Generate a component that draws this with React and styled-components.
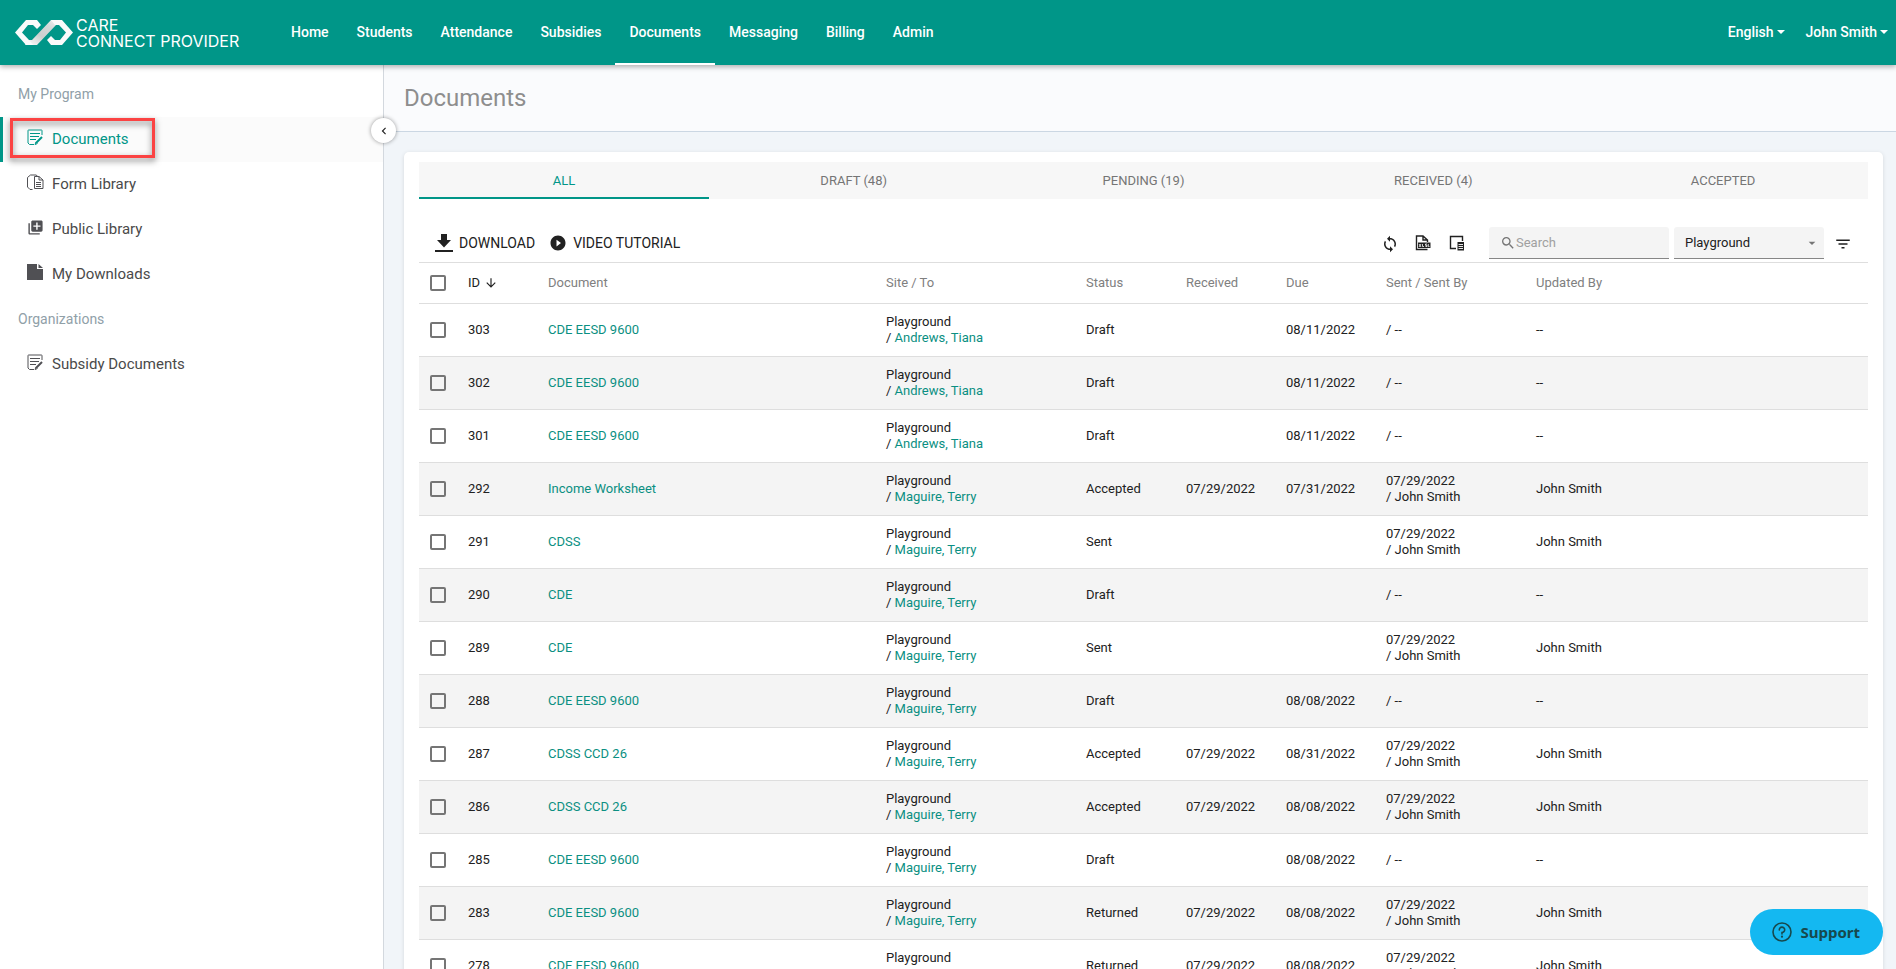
import React from "react";
import styled, { createGlobalStyle, css } from "styled-components";
import {
  MdArrowDownward,
  MdArrowDropDown,
  MdChevronLeft,
  MdFilterList,
  MdLibraryAdd,
  MdPlayCircleFilled,
  MdSearch,
  MdSync,
} from "react-icons/md";

const teal = "#009688";

const GlobalStyle = createGlobalStyle`
  *, *::before, *::after { box-sizing: border-box; }
  body {
    margin: 0;
    font-family: Roboto, "Liberation Sans", sans-serif;
    font-size: 13px;
    line-height: 16px;
    color: #212121;
  }
  a { color: inherit; text-decoration: none; }
  button, input, select { font: inherit; color: inherit; }
  button { border: 0; padding: 0; background: none; cursor: pointer; }
`;

const Page = styled.div`
  display: flex;
  flex-direction: column;
  height: 100vh;
  overflow: hidden;
`;

/* Header */

const Header = styled.header`
  display: flex;
  align-items: stretch;
  flex: none;
  height: 65px;
  padding: 0 8px 0 15px;
  background: ${teal};
  color: #fff;
  position: relative;
  z-index: 2;
  box-shadow: 0 2px 5px rgba(0, 0, 0, 0.3);
`;

const Brand = styled.a`
  display: flex;
  align-items: center;
  gap: 3px;
  width: 262px;
`;

const BrandName = styled.span`
  font-family: Inter, sans-serif;
  font-size: 16px;
  line-height: 16px;
  white-space: nowrap;
`;

const BrandLine = styled.span`
  display: block;
`;

const Nav = styled.nav`
  display: flex;
  flex: 1;
`;

const NavLink = styled.a`
  display: flex;
  align-items: center;
  padding: 1px 14px 0;
  border-bottom: 2px solid ${(p) => (p.$active ? "#fff" : "transparent")};
  font-size: 14px;
  font-weight: 500;
`;

const HeaderActions = styled.div`
  display: flex;
  gap: 21px;
`;

const HeaderMenu = styled.button`
  display: flex;
  align-items: center;
  gap: 3px;
  padding-bottom: 1px;
  font-size: 14px;
  font-weight: 500;
`;

const Caret = styled.span`
  border: 4px solid transparent;
  border-top-color: currentColor;
  border-bottom: 0;
`;

/* Sidebar */

const Body = styled.div`
  display: flex;
  flex: 1;
  min-height: 0;
`;

const Sidebar = styled.aside`
  position: relative;
  flex: none;
  width: 384px;
  padding-top: 7px;
  border-right: 1px solid #d3d8de;
  background: #fff;
`;

const SectionLabel = styled.h2`
  display: flex;
  align-items: center;
  height: 45px;
  margin: 0;
  padding: 0 0 1px 18px;
  font-size: 14px;
  font-weight: 400;
  color: #90a0a8;
`;

const SideLink = styled.a`
  position: relative;
  display: flex;
  align-items: center;
  gap: 8px;
  height: 45px;
  padding: 0 0 2px 23px;
  border-left: 3px solid ${(p) => (p.$active ? teal : "transparent")};
  background: ${(p) => (p.$active ? "#fbfbfb" : "none")};
  color: ${(p) => (p.$active ? teal : "#4a4a4a")};
  font-size: 15px;
`;

const SideIcon = styled.span`
  display: grid;
  place-items: center;
  flex: none;
  width: 18px;
  height: 18px;
  margin-bottom: 3px;
  color: ${(p) => (p.$active ? teal : "#505054")};
`;

const Highlight = styled.span`
  position: absolute;
  left: 7px;
  top: 1px;
  width: 145px;
  height: 40px;
  border: 3px solid #fb4343;
  filter: drop-shadow(0 3px 3px rgba(0, 0, 0, 0.5));
`;

const Collapse = styled.button`
  position: absolute;
  top: 53px;
  right: -13px;
  z-index: 1;
  display: grid;
  place-items: center;
  width: 25px;
  height: 25px;
  border-radius: 50%;
  background: #fff;
  box-shadow: 0 0 4px rgba(0, 0, 0, 0.4);
`;

/* Main area */

const Main = styled.main`
  display: flex;
  flex-direction: column;
  flex: 1;
  min-width: 0;
  background: #f1f5f9;
`;

const TitleBar = styled.div`
  flex: none;
  height: 67px;
  padding: 18px 20px 0;
  border-bottom: 1px solid #cbd7e3;
  background: #fafbfd;
`;

const Title = styled.h1`
  margin: 0;
  font-size: 24px;
  line-height: 30px;
  font-weight: 400;
  color: #8e8e8e;
`;

const Card = styled.section`
  margin: 20px 13px 0 20px;
  padding: 10px 15px;
  border-radius: 5px;
  background: #fff;
  box-shadow: 0 1px 4px rgba(0, 0, 0, 0.12);
`;

const Tabs = styled.div`
  display: flex;
  height: 37px;
  background: #f7f7f7;
`;

const Tab = styled.button`
  flex: 1;
  padding-top: 2px;
  border-bottom: 2px solid ${(p) => (p.$active ? teal : "transparent")};
  color: ${(p) => (p.$active ? teal : "#757575")};
`;

const Toolbar = styled.div`
  display: flex;
  align-items: center;
  height: 64px;
  padding: 25px 18px 0 16px;
  border-bottom: 1px solid #dedede;
`;

const TextButton = styled.button`
  display: flex;
  align-items: center;
  gap: 6px;
  margin-right: 14px;
  font-size: 14px;
`;

const IconGroup = styled.div`
  display: flex;
  gap: 18px;
  margin: 0 24px 0 auto;
`;

const IconButton = styled.button`
  display: grid;
  place-items: center;
  width: 16px;
  height: 16px;
`;

const fieldBox = css`
  height: 32px;
  border: 0;
  border-bottom: 1px solid #868686;
  border-radius: 3px 3px 0 0;
  background: #f4f4f4;
`;

const SearchBox = styled.label`
  ${fieldBox}
  display: flex;
  align-items: center;
  width: 180px;
  padding: 1px 10px 0 11px;
  margin-right: 5px;
  color: #757575;
`;

const SearchInput = styled.input`
  flex: 1;
  min-width: 0;
  padding: 0;
  border: 0;
  outline: 0;
  background: none;

  &::placeholder { color: #a0a0a0; }
`;

const SelectBox = styled.div`
  position: relative;
  width: 150px;
  margin-right: 10px;

  svg {
    position: absolute;
    right: 4px;
    top: 8px;
    color: #757575;
    pointer-events: none;
  }
`;

const Select = styled.select`
  ${fieldBox}
  width: 100%;
  padding: 1px 11px 0;
  appearance: none;
  outline: 0;
`;

/* Table */

const Table = styled.table`
  width: 100%;
  table-layout: fixed;
  border-collapse: separate;
  border-spacing: 0;
`;

const HeadCell = styled.th`
  height: 41px;
  padding: 0 0 0 10px;
  border-bottom: 1px solid #dedede;
  text-align: left;
  font-weight: 400;
  color: ${(p) => (p.$sorted ? "#212121" : "#808080")};
`;

const SortButton = styled.button`
  display: flex;
  align-items: center;
  gap: 4px;
`;

const Row = styled.tr`
  background: ${(p) => (p.$shaded ? "#f4f4f4" : "#fff")};
`;

const Cell = styled.td`
  height: 53px;
  padding: 0 0 0 10px;
  border-bottom: 1px solid #dedede;
`;

const Link = styled.a`
  color: #0b8f82;
`;

const Checkbox = styled.input`
  display: block;
  appearance: none;
  width: 16px;
  height: 16px;
  margin: 0 0 0 1px;
  border: 2px solid #757575;
  border-radius: 2px;

  &:checked { background: ${teal}; border-color: ${teal}; }
`;

const Support = styled.button`
  position: fixed;
  right: 13px;
  bottom: 14px;
  z-index: 3;
  display: flex;
  align-items: center;
  gap: 8px;
  height: 46px;
  padding: 0 23px 0 22px;
  border-radius: 23px;
  background: #14b8f1;
  color: #17494d;
  font-family: "Noto Sans", sans-serif;
  font-size: 15px;
  font-weight: 700;
`;

/* Drawings */

const LogoMark = () => (
  <svg width="58" height="25" viewBox="0 0 58 25" aria-hidden="true">
    <defs>
      <linearGradient id="band" x1="0" y1="1" x2="1" y2="0">
        <stop offset="0.1" stopColor="#f4f4f4" />
        <stop offset="0.4" stopColor="#cccfcf" />
        <stop offset="0.7" stopColor="#d4d8d8" />
        <stop offset="1" stopColor="#f8f8f8" />
      </linearGradient>
    </defs>
    <path d="M36 0H46L41 5L22 25H10L14 20H17Z" fill="url(#band)" />
    <path d="M11 0H22L26 5L22 9L18 5H13L7 12.500L14 20L18 25H11L0 12.500Z" fill="#fafafa" />
    <path d="M36 0H47L58 12.500L47 25H36L32 20L36 16L40 20H45L51 12.500L44 5H40Z" fill="#fafafa" />
  </svg>
);

const NoteIcon = () => (
  <svg width="16" height="17" viewBox="0 0 16 17" fill="none" stroke="currentColor" aria-hidden="true">
    <path d="M15 6V1.500Q15 1 14.500 1H1.500Q1 1 1 1.500V14L2.500 15.500H7" />
    <path d="M3 4.500H13M3 7.500H12M3 10.500H9" />
    <path d="M15 8L9 14" strokeWidth="2" />
    <path d="M9 13L8 15.500L10.500 14.500" />
  </svg>
);

const FormsIcon = () => (
  <svg width="17" height="17" viewBox="0 0 17 17" fill="none" stroke="currentColor" aria-hidden="true">
    <path d="M5.500 15.500H3L.5 13V3.500L3.500 1H9L10.500 2" />
    <path d="M7.500 14.500V2.500H12L16 6V14.500Z" />
    <path d="M12 2.500V6H16M9 8.500H14M9 10.500H14M9 12.500H14" />
  </svg>
);

const FileIcon = () => (
  <svg width="16" height="16" viewBox="0 0 16 16" fill="currentColor" aria-hidden="true">
    <path d="M0 0H10V5H16V16H0ZM11.500 0L16 4H11.500Z" />
  </svg>
);

const DownloadIcon = () => (
  <svg width="18" height="18" viewBox="0 0 18 18" fill="currentColor" aria-hidden="true">
    <path d="M6 0H12V6H16L9 13.500L2 6H6ZM0 16H18V18H0Z" />
  </svg>
);

const SheetIcon = () => (
  <svg width="16" height="16" viewBox="0 0 16 16" fill="none" stroke="currentColor" aria-hidden="true">
    <path d="M12.500 14.500H1.500V1H8L12.500 5V7M8 1V5H12.500" strokeWidth="1.400" />
    <path d="M3 7.500H15.500V13H3Z" fill="currentColor" stroke="none" />
    <path d="M4 9L6 12M6 9L4 12M7.500 9V11.500H9M12 9H10.500V10.300H12V11.500H10.500M13.300 9V11.500H14.500" stroke="#fff" strokeWidth=".8" />
  </svg>
);

const ColumnsIcon = () => (
  <svg width="16" height="16" viewBox="0 0 16 16" fill="none" stroke="currentColor" aria-hidden="true">
    <path d="M7 13.500H1.500V1.500H13.500V6" strokeWidth="1.400" />
    <path d="M8.500 7H15V15.500H8.500Z" fill="currentColor" stroke="none" />
    <path d="M9.500 9.500H14M9.500 11.500H14M9.500 13.500H14" stroke="#fff" strokeWidth=".9" />
  </svg>
);

const HelpIcon = () => (
  <svg width="20" height="20" viewBox="0 0 20 20" fill="none" stroke="currentColor" strokeWidth="1.600" aria-hidden="true">
    <circle cx="10" cy="10" r="9" />
    <path d="M7.300 8A2.700 2.700 0 1 1 10 10.500V12" strokeLinecap="round" />
    <circle cx="10" cy="14.700" r="1.100" fill="currentColor" stroke="none" />
  </svg>
);

/* Data */

const navItems = ["Home", "Students", "Attendance", "Subsidies", "Documents", "Messaging", "Billing", "Admin"];
const tabs = ["ALL", "DRAFT (48)", "PENDING (19)", "RECEIVED (4)", "ACCEPTED"];
const columns = ["Document", "Site / To", "Status", "Received", "Due", "Sent / Sent By", "Updated By"];

const andrews = "Andrews, Tiana";
const maguire = "Maguire, Terry";
const john = "John Smith";
const jul29 = "07/29/2022";

const documents = [
  { id: 303, name: "CDE EESD 9600", to: andrews, status: "Draft", due: "08/11/2022" },
  { id: 302, name: "CDE EESD 9600", to: andrews, status: "Draft", due: "08/11/2022" },
  { id: 301, name: "CDE EESD 9600", to: andrews, status: "Draft", due: "08/11/2022" },
  { id: 292, name: "Income Worksheet", to: maguire, status: "Accepted", received: jul29, due: "07/31/2022", sent: jul29, by: john },
  { id: 291, name: "CDSS", to: maguire, status: "Sent", sent: jul29, by: john },
  { id: 290, name: "CDE", to: maguire, status: "Draft" },
  { id: 289, name: "CDE", to: maguire, status: "Sent", sent: jul29, by: john },
  { id: 288, name: "CDE EESD 9600", to: maguire, status: "Draft", due: "08/08/2022" },
  { id: 287, name: "CDSS CCD 26", to: maguire, status: "Accepted", received: jul29, due: "08/31/2022", sent: jul29, by: john },
  { id: 286, name: "CDSS CCD 26", to: maguire, status: "Accepted", received: jul29, due: "08/08/2022", sent: jul29, by: john },
  { id: 285, name: "CDE EESD 9600", to: maguire, status: "Draft", due: "08/08/2022" },
  { id: 283, name: "CDE EESD 9600", to: maguire, status: "Returned", received: jul29, due: "08/08/2022", sent: jul29, by: john },
  { id: 278, name: "CDE EESD 9600", to: maguire, status: "Returned", received: jul29, due: "08/08/2022", sent: jul29, by: john },
];

const DocumentRow = ({ doc, shaded }) => (
  <Row $shaded={shaded}>
    <Cell><Checkbox type="checkbox" aria-label={`Select document ${doc.id}`} /></Cell>
    <Cell>{doc.id}</Cell>
    <Cell><Link href="#">{doc.name}</Link></Cell>
    <Cell>Playground<br />/ <Link href="#">{doc.to}</Link></Cell>
    <Cell>{doc.status}</Cell>
    <Cell>{doc.received}</Cell>
    <Cell>{doc.due}</Cell>
    <Cell>{doc.sent && <>{doc.sent}<br /></>}/ {doc.by || "--"}</Cell>
    <Cell>{doc.by || "--"}</Cell>
    <Cell />
  </Row>
);

const SideItem = ({ icon, label, active, children }) => (
  <SideLink href="#" $active={active}>
    <SideIcon $active={active}>{icon}</SideIcon>
    {label}
    {children}
  </SideLink>
);

export default function App() {
  return (
    <Page>
      <GlobalStyle />
      <Header>
        <Brand href="#">
          <LogoMark />
          <BrandName>
            <BrandLine>CARE</BrandLine>
            <BrandLine>CONNECT PROVIDER</BrandLine>
          </BrandName>
        </Brand>
        <Nav>
          {navItems.map((item) => (
            <NavLink key={item} href="#" $active={item === "Documents"}>{item}</NavLink>
          ))}
        </Nav>
        <HeaderActions>
          <HeaderMenu>English<Caret /></HeaderMenu>
          <HeaderMenu>John Smith<Caret /></HeaderMenu>
        </HeaderActions>
      </Header>
      <Body>
        <Sidebar>
          <SectionLabel>My Program</SectionLabel>
          <SideItem icon={<NoteIcon />} label="Documents" active><Highlight /></SideItem>
          <SideItem icon={<FormsIcon />} label="Form Library" />
          <SideItem icon={<MdLibraryAdd size={17} />} label="Public Library" />
          <SideItem icon={<FileIcon />} label="My Downloads" />
          <SectionLabel>Organizations</SectionLabel>
          <SideItem icon={<NoteIcon />} label="Subsidy Documents" />
          <Collapse aria-label="Collapse sidebar"><MdChevronLeft size={14} /></Collapse>
        </Sidebar>
        <Main>
          <TitleBar><Title>Documents</Title></TitleBar>
          <Card>
            <Tabs role="tablist">
              {tabs.map((tab, i) => (
                <Tab key={tab} role="tab" aria-selected={i === 0} $active={i === 0}>{tab}</Tab>
              ))}
            </Tabs>
            <Toolbar>
              <TextButton><DownloadIcon />DOWNLOAD</TextButton>
              <TextButton><MdPlayCircleFilled size={18} />VIDEO TUTORIAL</TextButton>
              <IconGroup>
                <IconButton aria-label="Refresh"><MdSync size={18} /></IconButton>
                <IconButton aria-label="Export to spreadsheet"><SheetIcon /></IconButton>
                <IconButton aria-label="Choose columns"><ColumnsIcon /></IconButton>
              </IconGroup>
              <SearchBox>
                <MdSearch size={16} />
                <SearchInput type="text" placeholder="Search" aria-label="Search" />
              </SearchBox>
              <SelectBox>
                <Select aria-label="Site"><option>Playground</option></Select>
                <MdArrowDropDown size={16} />
              </SelectBox>
              <IconButton aria-label="Filter"><MdFilterList size={18} /></IconButton>
            </Toolbar>
            <Table>
              <colgroup>
                <col width="39" />
                <col width="80" />
                <col />
                <col width="200" />
                <col width="100" />
                <col width="100" />
                <col width="100" />
                <col width="150" />
                <col width="150" />
                <col width="192" />
              </colgroup>
              <thead>
                <tr>
                  <HeadCell><Checkbox type="checkbox" aria-label="Select all documents" /></HeadCell>
                  <HeadCell $sorted><SortButton>ID<MdArrowDownward size={14} /></SortButton></HeadCell>
                  {columns.map((c) => <HeadCell key={c}>{c}</HeadCell>)}
                  <HeadCell />
                </tr>
              </thead>
              <tbody>
                {documents.map((doc, i) => <DocumentRow key={doc.id} doc={doc} shaded={i % 2 === 1} />)}
              </tbody>
            </Table>
          </Card>
        </Main>
      </Body>
      <Support><HelpIcon />Support</Support>
    </Page>
  );
}
